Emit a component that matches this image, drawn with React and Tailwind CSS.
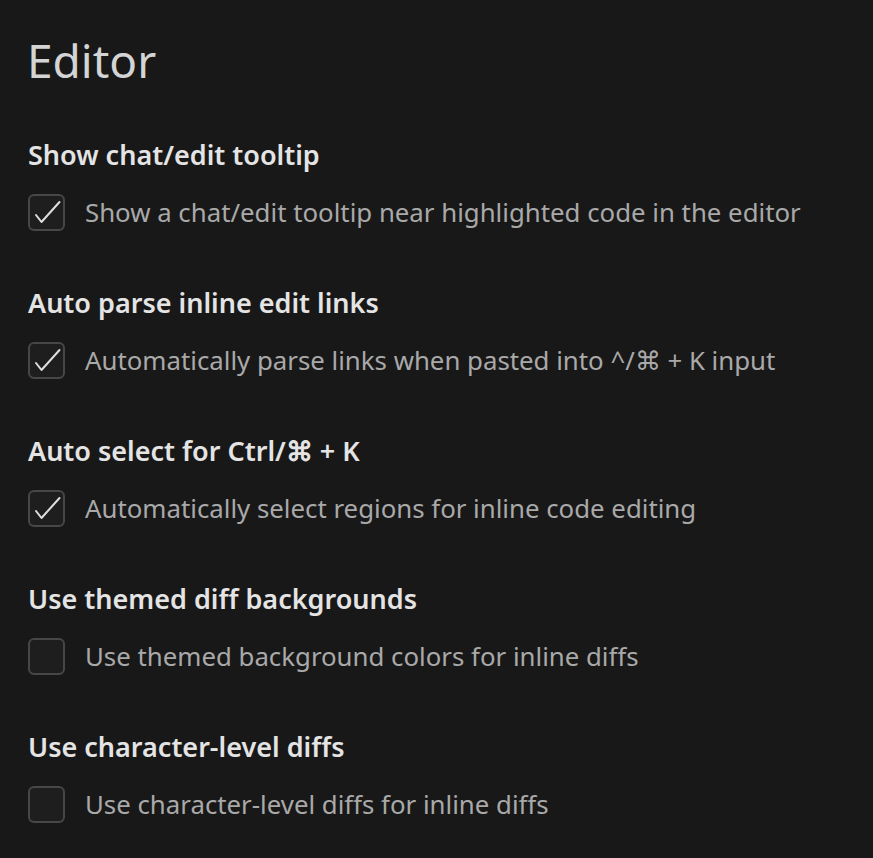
import { useState } from 'react'

const settings = [
  { title: 'Show chat/edit tooltip', desc: 'Show a chat/edit tooltip near highlighted code in the editor', on: true },
  { title: 'Auto parse inline edit links', desc: 'Automatically parse links when pasted into ^/⌘ + K input', on: true },
  { title: 'Auto select for Ctrl/⌘ + K', desc: 'Automatically select regions for inline code editing', on: true },
  { title: 'Use themed diff backgrounds', desc: 'Use themed background colors for inline diffs', on: false },
  { title: 'Use character-level diffs', desc: 'Use character-level diffs for inline diffs', on: false },
]

function Check({ checked, onChange }) {
  return (
    <button
      onClick={onChange}
      className="w-[37px] h-[37px] shrink-0 rounded-[6px] border-2 border-[#474747] bg-[#1e1e1e]
                 flex items-center justify-center"
    >
      {checked && (
        <svg width="33" height="33" viewBox="0 0 33 33" fill="none">
          <path d="M6 19 L11.5 26 L29.5 6" stroke="#dedede" strokeWidth="2" strokeLinecap="round" strokeLinejoin="round" />
        </svg>
      )}
    </button>
  )
}

function SettingRow({ item }) {
  const [on, setOn] = useState(item.on)
  return (
    <div className="mb-[54px]">
      <h3 className="text-[27px] leading-[36px] font-semibold text-[#e4e4e4]">{item.title}</h3>
      <div className="flex items-center gap-[20px] mt-[21px]">
        <Check checked={on} onChange={() => setOn(!on)} />
        <span className="text-[25.8px] leading-[37px] text-[#a9a9a9]">{item.desc}</span>
      </div>
    </div>
  )
}

export default function App() {
  return (
    <div
      className="min-h-screen bg-[#181818] px-[28px] pt-[30px] overflow-hidden"
      style={{ fontFamily: '"Noto Sans", "Open Sans", sans-serif' }}
    >
      <h1 className="text-[46px] leading-[60px] text-[#d4d4d4] mb-[47px] -ml-[1px]">Editor</h1>
      {settings.map(s => <SettingRow key={s.title} item={s} />)}
    </div>
  )
}
